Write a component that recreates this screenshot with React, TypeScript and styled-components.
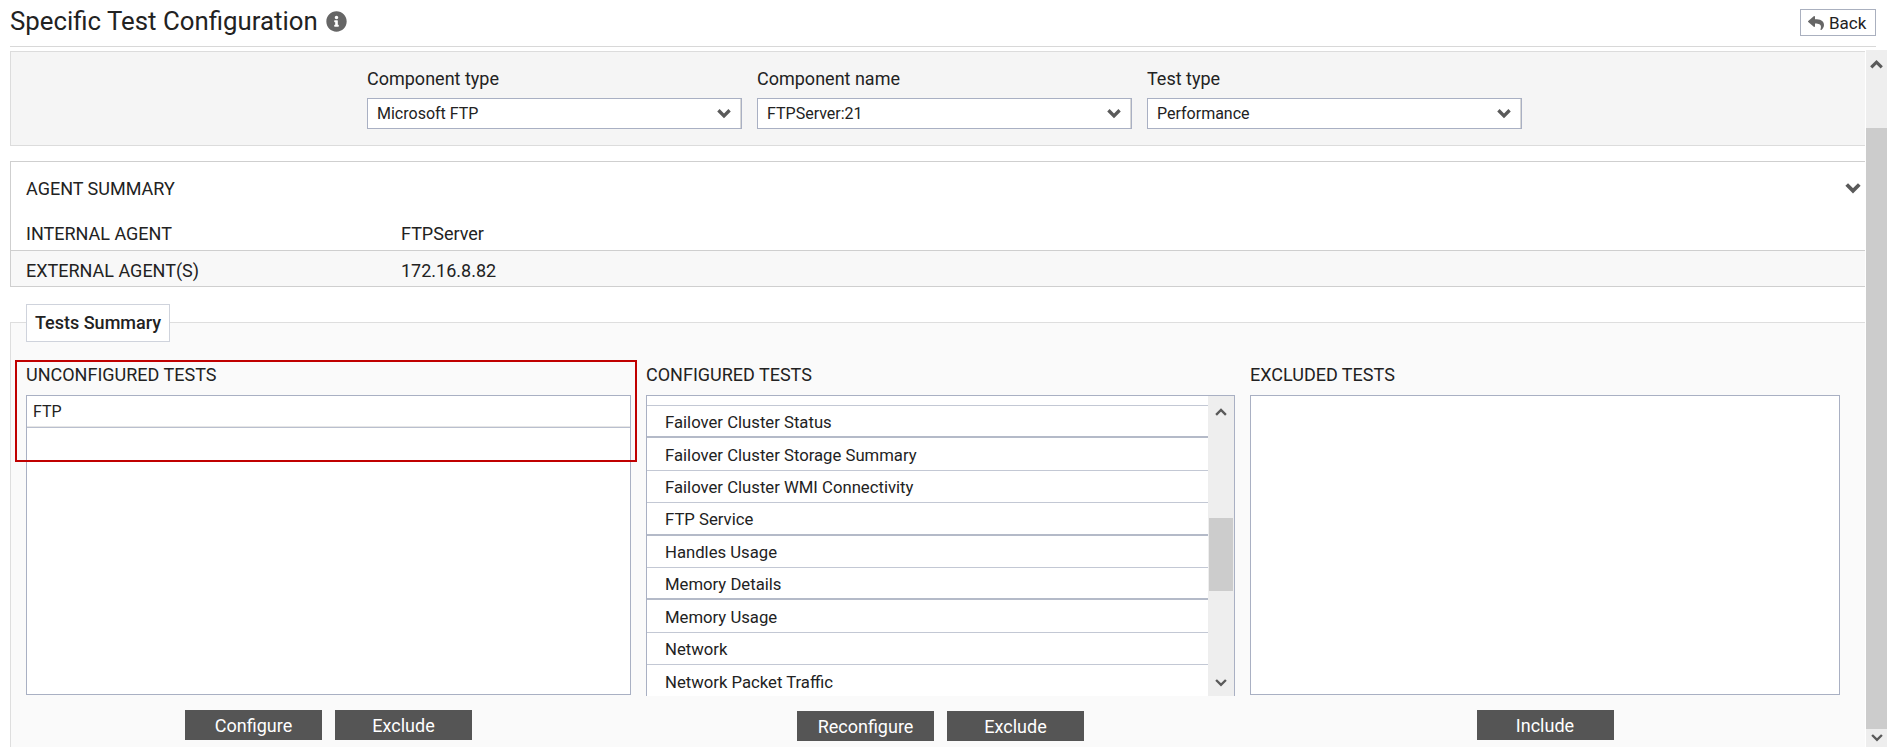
import styled, { createGlobalStyle } from "styled-components"
import { FaInfoCircle, FaReply } from "react-icons/fa"

const GlobalStyle = createGlobalStyle`
  html, body {
    margin: 0;
    height: 100%;
    overflow: hidden;
    background: #fff;
    font-family: Roboto, "Liberation Sans", sans-serif;
    color: #222;
  }
  * { box-sizing: border-box; }
`

const Chevron = ({ up, size = 16, width = 3 }: { up?: boolean; size?: number; width?: number }) => (
  <svg width={size} height={size * 0.7} viewBox="0 0 14 10" fill="none">
    <path
      d={up ? "M2 8L7 3L12 8" : "M2 2L7 7L12 2"}
      stroke="#5a5a5a"
      strokeWidth={width}
    />
  </svg>
)

const selects = [
  { label: "Component type", value: "Microsoft FTP" },
  { label: "Component name", value: "FTPServer:21" },
  { label: "Test type", value: "Performance" },
]

const configured = [
  { name: "Failover Cluster Status", heavy: true },
  { name: "Failover Cluster Storage Summary" },
  { name: "Failover Cluster WMI Connectivity" },
  { name: "FTP Service", heavy: true },
  { name: "Handles Usage" },
  { name: "Memory Details", heavy: true },
  { name: "Memory Usage" },
  { name: "Network" },
  { name: "Network Packet Traffic" },
]

export default function App() {
  return (
    <Page>
      <GlobalStyle />
      <Header>
        <TitleWrap>
          <Title>Specific Test Configuration</Title>
          <FaInfoCircle size={21} color="#666" />
        </TitleWrap>
        <BackButton>
          <FaReply size={16} color="#666" />
          Back
        </BackButton>
      </Header>
      <Body>
        <Content>
          <FilterPanel>
            {selects.map((s) => (
              <Field key={s.label}>
                <FieldLabel>{s.label}</FieldLabel>
                <Select>
                  {s.value}
                  <Chevron />
                </Select>
              </Field>
            ))}
          </FilterPanel>

          <AgentPanel>
            <AgentHead>
              AGENT SUMMARY
              <Chevron size={18} />
            </AgentHead>
            <AgentRow>
              <AgentKey>INTERNAL AGENT</AgentKey>
              <span>FTPServer</span>
            </AgentRow>
            <AgentRow $shaded>
              <AgentKey>EXTERNAL AGENT(S)</AgentKey>
              <span>172.16.8.82</span>
            </AgentRow>
          </AgentPanel>

          <TestsPanel>
            <Tab>Tests Summary</Tab>
            <Columns>
              <Column>
                <RedBox />
                <ColumnTitle>UNCONFIGURED TESTS</ColumnTitle>
                <ListBox>
                  <PlainRow>FTP</PlainRow>
                </ListBox>
                <Actions>
                  <ActionButton>Configure</ActionButton>
                  <ActionButton>Exclude</ActionButton>
                </Actions>
              </Column>

              <Column>
                <ColumnTitle>CONFIGURED TESTS</ColumnTitle>
                <ListBox $open>
                  <RowScroller>
                    <ClippedRow />
                    {configured.map((t) => (
                      <TestRow key={t.name} $heavy={t.heavy}>
                        {t.name}
                      </TestRow>
                    ))}
                  </RowScroller>
                  <ListScrollbar>
                    <Chevron up size={14} width={2.4} />
                    <ListThumb />
                    <Chevron size={14} width={2.4} />
                  </ListScrollbar>
                </ListBox>
                <Actions>
                  <ActionButton>Reconfigure</ActionButton>
                  <ActionButton>Exclude</ActionButton>
                </Actions>
              </Column>

              <Column>
                <ColumnTitle>EXCLUDED TESTS</ColumnTitle>
                <ListBox />
                <Actions>
                  <ActionButton>Include</ActionButton>
                </Actions>
              </Column>
            </Columns>
          </TestsPanel>
        </Content>

        <PageScrollbar>
          <PageScrollCap>
            <Chevron up size={15} />
          </PageScrollCap>
          <PageScrollThumb />
          <PageScrollEnd>
            <Chevron size={14} width={2.4} />
          </PageScrollEnd>
        </PageScrollbar>
      </Body>
    </Page>
  )
}

const Page = styled.div`
  height: 747px;
  display: flex;
  flex-direction: column;
  overflow: hidden;
`
const Header = styled.header`
  flex: none;
  height: 47px;
  margin: 0 11px 0 10px;
  padding-top: 9px;
  border-bottom: 1px solid #d8d8d8;
  display: flex;
  justify-content: space-between;
  align-items: flex-start;
`
const TitleWrap = styled.div`
  display: flex;
  align-items: center;
  gap: 8px;
  height: 24px;
`
const Title = styled.h1`
  margin: 0;
  font-size: 25.8px;
  font-weight: 400;
  line-height: 24px;
  color: #222;
`
const BackButton = styled.button`
  width: 76px;
  height: 27px;
  padding: 0 0 0 7px;
  display: flex;
  align-items: center;
  gap: 5px;
  background: #fff;
  border: 1px solid #aab0bf;
  font: 400 17px Roboto, sans-serif;
  color: #222;
`
const Body = styled.div`
  flex: 1;
  min-height: 0;
  display: flex;
  margin-top: 3px;
`
const Content = styled.main`
  flex: 1;
  min-width: 0;
  margin: 1px 1px 0 10px;
  display: flex;
  flex-direction: column;
`
const FilterPanel = styled.section`
  flex: none;
  height: 95px;
  padding: 16px 0 0 356px;
  display: flex;
  gap: 15px;
  background: #f5f5f5;
  border: 1px solid #dcdcdc;
  border-right: none;
`
const Field = styled.div`
  width: 375px;
`
const FieldLabel = styled.div`
  height: 30px;
  font-size: 18px;
  line-height: 22px;
`
const Select = styled.div`
  height: 31px;
  padding: 0 9px;
  display: flex;
  align-items: center;
  justify-content: space-between;
  background: #fff;
  border: 1px solid #a9b0c3;
  box-shadow: inset -1px 0 0 #d8d8d8;
  font-size: 16px;
`
const AgentPanel = styled.section`
  flex: none;
  height: 126px;
  margin-top: 15px;
  border: 1px solid #cfcfcf;
  border-right: none;
  display: flex;
  flex-direction: column;
  font-size: 18px;
`
const AgentHead = styled.div`
  height: 52px;
  padding: 0 3px 0 15px;
  display: flex;
  align-items: center;
  justify-content: space-between;
`
const AgentRow = styled.div<{ $shaded?: boolean }>`
  height: 36px;
  padding: ${(p) => (p.$shaded ? "3px 0 0 15px" : "2px 0 0 15px")};
  display: flex;
  align-items: center;
  background: ${(p) => (p.$shaded ? "#f8f8f8" : "#fff")};
  border-top: ${(p) => (p.$shaded ? "1px solid #cfcfcf" : "none")};
`
const AgentKey = styled.span`
  width: 375px;
`
const TestsPanel = styled.section`
  flex: 1;
  min-height: 0;
  position: relative;
  margin-top: 35px;
  padding: 0 0 0 15px;
  background: #fafafa;
  border: 1px solid #dedede;
  border-right: none;
  border-bottom: none;
`
const Tab = styled.div`
  width: 144px;
  height: 38px;
  margin-top: -19px;
  padding-bottom: 2px;
  display: flex;
  align-items: center;
  justify-content: center;
  background: #fff;
  border: 1px solid #cfd3dc;
  font-size: 18px;
  font-weight: 500;
`
const Columns = styled.div`
  display: grid;
  grid-template-columns: 605px 589px 590px;
  gap: 15px;
  margin-top: 22px;
`
const Column = styled.div`
  position: relative;
`
const RedBox = styled.div`
  position: absolute;
  top: -4px;
  left: -11px;
  width: 622px;
  height: 102px;
  border: 2px solid #c00000;
  pointer-events: none;
`
const ColumnTitle = styled.div`
  height: 31px;
  font-size: 18px;
  line-height: 22px;
`
const ListBox = styled.div<{ $open?: boolean }>`
  height: ${(p) => (p.$open ? "301px" : "300px")};
  display: flex;
  overflow: hidden;
  background: #fff;
  border: 1px solid #a9b0c3;
  border-bottom: ${(p) => (p.$open ? "none" : "1px solid #a9b0c3")};
  flex-direction: ${(p) => (p.$open ? "row" : "column")};
`
const PlainRow = styled.div`
  flex: none;
  height: 32px;
  padding-left: 6px;
  display: flex;
  align-items: center;
  font-size: 16px;
  border-bottom: 1px solid #b9bfce;
  box-shadow: 0 -1px 0 #e6e6e6 inset;
`
const RowScroller = styled.div`
  flex: 1;
  min-width: 0;
`
const ClippedRow = styled.div`
  height: 10px;
  border-bottom: 1px solid #c3c8d4;
`
const TestRow = styled.div<{ $heavy?: boolean }>`
  height: 32.4px;
  padding: 3px 0 0 18px;
  display: flex;
  align-items: center;
  font-size: 16.7px;
  border-bottom: ${(p) => (p.$heavy ? "2px solid #b4bac8" : "1px solid #c3c8d4")};
`
const ListScrollbar = styled.div`
  flex: none;
  width: 26px;
  padding: 11px 2px 8px 1px;
  display: flex;
  flex-direction: column;
  align-items: center;
  justify-content: space-between;
  position: relative;
  background: #eee;
`
const ListThumb = styled.div`
  position: absolute;
  top: 122px;
  left: 1px;
  width: 24px;
  height: 73px;
  background: #ccc;
`
const Actions = styled.div`
  height: 30px;
  margin-top: 15px;
  display: flex;
  justify-content: center;
  gap: 13px;
`
const ActionButton = styled.button`
  width: 137px;
  height: 30px;
  padding: 0;
  border: none;
  background: #555;
  color: #fff;
  font: 400 18px Roboto, sans-serif;
`
const PageScrollbar = styled.aside`
  flex: none;
  width: 21px;
  display: flex;
  flex-direction: column;
`
const PageScrollCap = styled.div`
  height: 78px;
  padding-top: 9px;
  display: flex;
  justify-content: center;
  background: #eee;
`
const PageScrollThumb = styled.div`
  flex: 1;
  background: #ccc;
`
const PageScrollEnd = styled.div`
  height: 18px;
  display: flex;
  align-items: center;
  justify-content: center;
  background: #eee;
`
